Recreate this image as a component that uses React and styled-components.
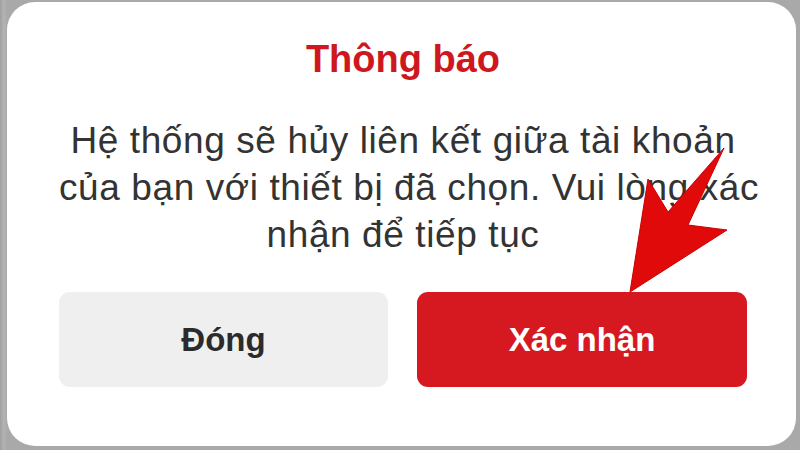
import React from "react";
import styled, { createGlobalStyle } from "styled-components";

const Global = createGlobalStyle`
  html, body { margin: 0; padding: 0; background: #a9a9a9; }
  body { width: 800px; height: 450px; overflow: hidden; font-family: "Liberation Sans", Arial, sans-serif; }
`;

const Stage = styled.div`
  position: relative;
  width: 800px;
  height: 450px;
  padding: 2px 4px 4px 7px;
  box-sizing: border-box;
  background: linear-gradient(90deg, #9f9f9f 0px, #b4b4b4 4px, #a9a9a9 7px);
`;

const Card = styled.div`
  width: 789px;
  height: 444px;
  background: #ffffff;
  border-radius: 28px;
  box-sizing: border-box;
  padding: 35px 49px 0 52px;
  display: flex;
  flex-direction: column;
  align-items: stretch;
`;

const Title = styled.div`
  text-align: center;
  color: #cf1720;
  font-weight: 700;
  font-size: 38px;
  line-height: 44px;
  height: 44px;
`;

const Message = styled.div`
  margin-top: 36px;
  text-align: center;
  color: #333333;
  font-size: 37px;
  letter-spacing: 0.6px;
  line-height: 47px;
`;

const Line = styled.div`
  white-space: nowrap;
`;

const Actions = styled.div`
  margin-top: 34px;
  display: grid;
  grid-template-columns: 329px 330px;
  column-gap: 29px;
  padding-left: 0;
`;

const Button = styled.button`
  height: 95px;
  border: none;
  border-radius: 11px;
  font-family: "Liberation Sans", Arial, sans-serif;
  font-weight: 700;
  font-size: 33px;
  cursor: pointer;
  background: ${(p) => (p.$primary ? "#d61921" : "#efefef")};
  color: ${(p) => (p.$primary ? "#ffffff" : "#2b2b2b")};
`;

const ArrowSvg = styled.svg`
  position: absolute;
  left: 0;
  top: 0;
  pointer-events: none;
`;

export default function App() {
  return (
    <>
      <Global />
      <Stage>
        <Card>
          <Title>Thông báo</Title>
          <Message>
            <Line>Hệ thống sẽ hủy liên kết giữa tài khoản</Line>
            <Line>của bạn với thiết bị đã chọn. Vui lòng xác</Line>
            <Line>nhận để tiếp tục</Line>
          </Message>
          <Actions>
            <Button>Đóng</Button>
            <Button $primary>Xác nhận</Button>
          </Actions>
        </Card>
        <ArrowSvg width="800" height="450" viewBox="0 0 800 450">
          <polygon
            points="630,292 648,179 668,212 724,148 688,225 727,230"
            fill="#e10a0a"
            stroke="#c80000"
            strokeWidth="1"
            strokeLinejoin="miter"
          />
        </ArrowSvg>
      </Stage>
    </>
  );
}
